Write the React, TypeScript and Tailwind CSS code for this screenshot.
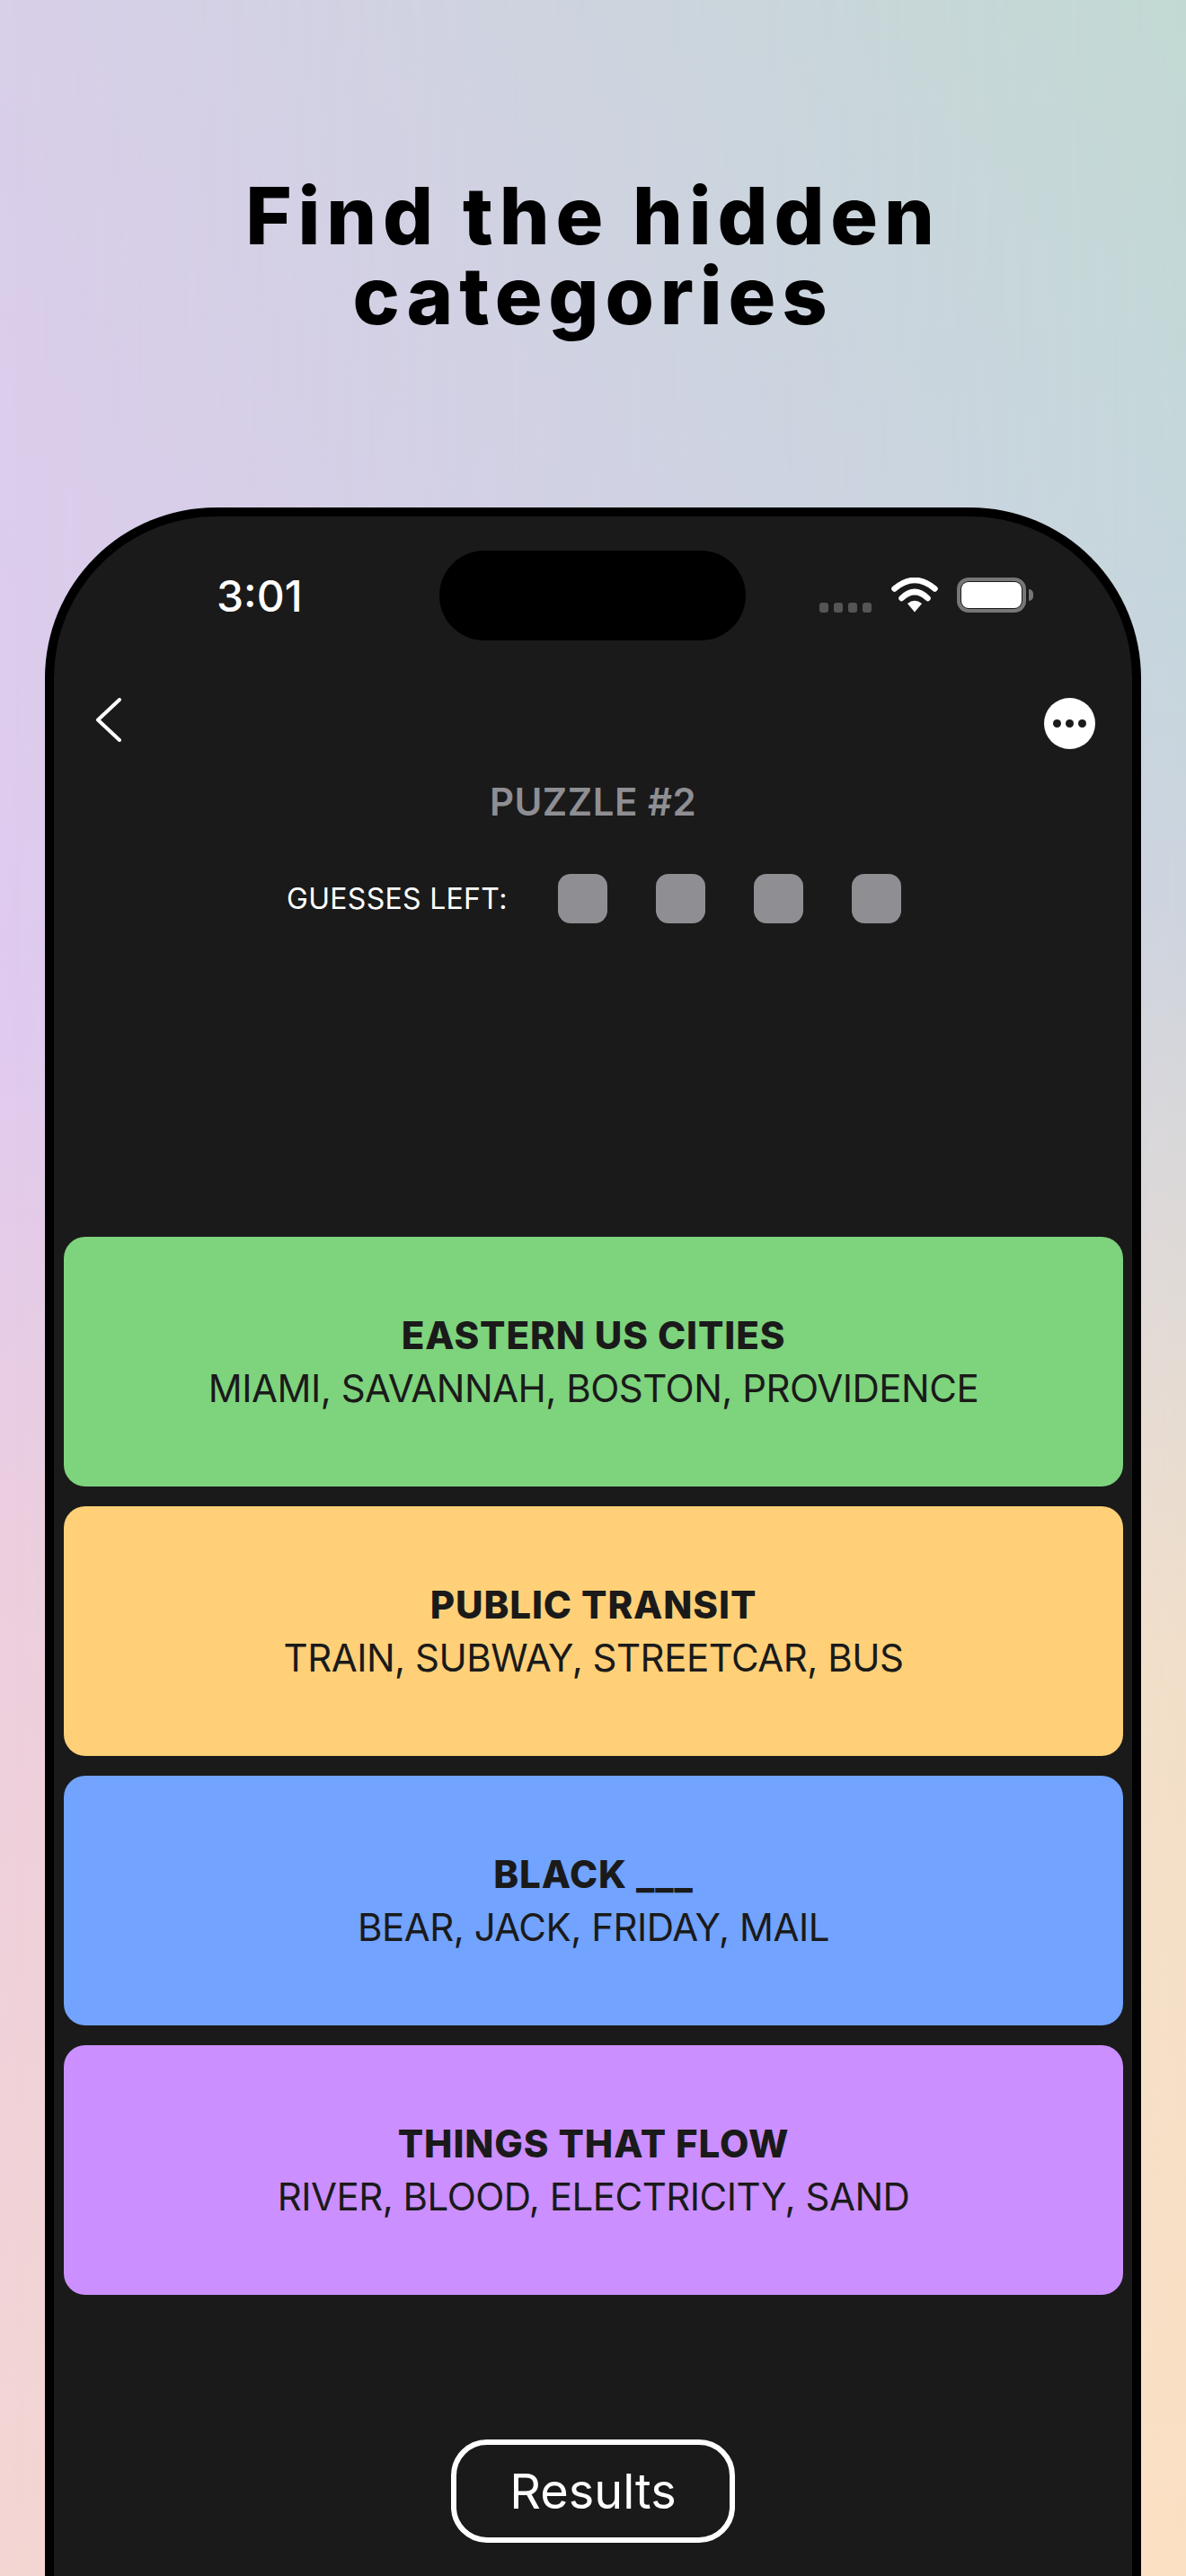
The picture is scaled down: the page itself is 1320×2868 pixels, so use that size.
const cards = [
  { title: 'EASTERN US CITIES', words: 'MIAMI, SAVANNAH, BOSTON, PROVIDENCE', color: 'bg-[#7ed37d]' },
  { title: 'PUBLIC TRANSIT', words: 'TRAIN, SUBWAY, STREETCAR, BUS', color: 'bg-[#ffd077]' },
  { title: 'BLACK ___', words: 'BEAR, JACK, FRIDAY, MAIL', color: 'bg-[#71a3ff]' },
  { title: 'THINGS THAT FLOW', words: 'RIVER, BLOOD, ELECTRICITY, SAND', color: 'bg-[#cb8fff]' },
];

function Wifi() {
  return (
    <svg width="52" height="39" viewBox="0 0 52 39" fill="none" stroke="white" strokeWidth="6.5" strokeLinecap="round">
      <path d="M26 38.5 L18 29 Q26 22.5 34 29 Z" fill="white" stroke="none" />
      <path d="M11.5 23 Q26 9 40.5 23" />
      <path d="M3.5 12.5 Q26 -6.5 48.5 12.5" />
    </svg>
  );
}

function Battery() {
  return (
    <div className="flex items-center">
      <div className="h-[39px] w-[77px] rounded-[13px] border-[4px] border-[#77777a] p-[1px]">
        <div className="h-full w-full rounded-[8px] bg-white" />
      </div>
      <div className="ml-[3px] h-[13px] w-[5px] rounded-r-full bg-[#77777a]" />
    </div>
  );
}

function StatusBar() {
  return (
    <div className="flex pl-[181px] pt-[38px]">
      <div className="flex h-[100px] w-[248px] items-center pt-[2px] text-[48px] font-medium leading-[58px] text-white">3:01</div>
      <div className="h-[100px] w-[341px] rounded-[50px] bg-black" />
      <div className="ml-[82px] mt-[30px] flex h-[39px] items-end">
        <div className="flex gap-[6px]">
          {[0, 1, 2, 3].map((i) => (
            <div key={i} className="h-[11px] w-[10px] rounded-[3px] bg-[#555558]" />
          ))}
        </div>
        <div className="ml-[22px]">
          <Wifi />
        </div>
        <div className="ml-[21px]">
          <Battery />
        </div>
      </div>
    </div>
  );
}

export default function App() {
  return (
    <div className="relative h-[2868px] w-[1320px] overflow-hidden bg-[linear-gradient(180deg,#d8cfe9_0%,#e0caef_40%,#eccedf_60%,#f3d6d3_100%)] font-['Inter',sans-serif] before:absolute before:inset-0 before:bg-[linear-gradient(180deg,#c2d9d3_0%,#c6d6dd_25%,#cdd4de_35%,#e0dad6_50%,#f2dfc9_65%,#fbe0c3_100%)] before:content-[''] before:[mask-image:linear-gradient(to_right,transparent,black)]">
      <div className="relative flex h-[565px] flex-col items-center pt-[196px] text-center text-[88px] font-extrabold leading-[89px] tracking-[6.8px] text-black">
        <div>
          Find the hidden
          <br />
          categories
        </div>
      </div>
      <div className="relative mx-[50px] h-[2303px] rounded-t-[190px] border-[10px] border-b-0 border-black bg-[#1a1a1a]">
        <StatusBar />

        <div className="mt-[64px] flex h-[57px] items-center justify-between pl-[47px] pr-[41px]">
          <svg className="mb-[8px]" width="28" height="49" viewBox="0 0 28 49" fill="none" stroke="white" strokeWidth="4" strokeLinecap="round" strokeLinejoin="round">
            <path d="M26 2 L2 24.5 L26 47" />
          </svg>
          <div className="flex h-[57px] w-[57px] items-center justify-center gap-[5px] rounded-full bg-white">
            {[0, 1, 2].map((i) => (
              <div key={i} className="h-[9px] w-[9px] rounded-full bg-[#1a1a1a]" />
            ))}
          </div>
        </div>

        <div className="mt-[34px] text-center text-[42px] font-semibold leading-[50px] tracking-[0.5px] text-[#8e8e93]">PUZZLE #2</div>

        <div className="mt-[55px] flex items-center pl-[259px]">
          <div className="w-[302px] text-[32px] leading-[40px] tracking-[0.3px] text-white">GUESSES LEFT:</div>
          <div className="flex gap-[54px]">
            {[0, 1, 2, 3].map((i) => (
              <div key={i} className="h-[55px] w-[55px] rounded-[14px] bg-[#8e8e93]" />
            ))}
          </div>
        </div>

        <div className="ml-[11px] mr-[10px] mt-[349px] flex flex-col gap-[22px]">
          {cards.map((card) => (
            <div key={card.title} className={`flex h-[278px] flex-col items-center justify-center rounded-[24px] text-center text-[42px] leading-[59px] text-[#1a1a1a] ${card.color}`}>
              <div className="font-extrabold tracking-[0.9px]">{card.title}</div>
              <div className="tracking-[-0.5px]">{card.words}</div>
            </div>
          ))}
        </div>

        <div className="mt-[161px] flex justify-center">
          <div className="flex h-[115px] w-[316px] items-center justify-center rounded-[40px] border-[6px] border-white text-[54px] text-white">Results</div>
        </div>
      </div>
    </div>
  );
}
